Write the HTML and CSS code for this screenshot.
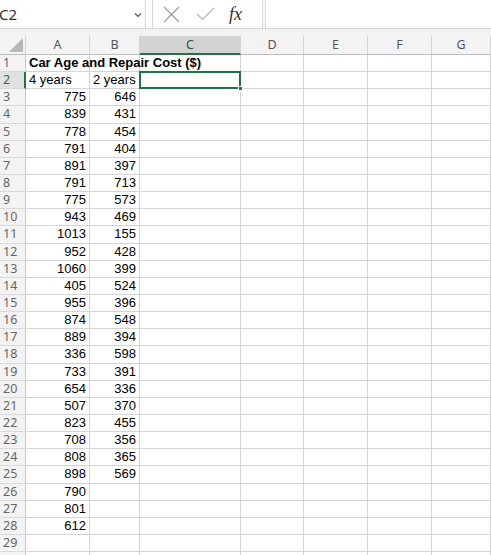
FILE: index.html
```html
<!DOCTYPE html>
<html lang="en">

<head>
    <meta charset="UTF-8">
    <meta name="viewport" content="width=device-width, initial-scale=1.0">
    <title>Car Age and Repair Cost</title>
    <link rel="stylesheet" href="styles.css">
</head>

<body>
    <div class="formula-bar">
        <div class="name-box">
            <span class="name">C2</span>
            <svg class="chevron" width="8" height="6" viewBox="0 0 8 6">
                <path d="M1 1.5 L4 4.5 L7 1.5" fill="none" stroke="#555" stroke-width="1.2" />
            </svg>
        </div>
        <div class="fx-box">
            <svg class="icon" width="17" height="17" viewBox="0 0 17 17">
                <path d="M1 1 L16 16 M16 1 L1 16" stroke="#9a9a9a" stroke-width="1.1" fill="none" />
            </svg>
            <svg class="icon" width="19" height="16" viewBox="0 0 19 16">
                <path d="M1 8 L6.5 13.5 L18 2" stroke="#b0b0b0" stroke-width="1.1" fill="none" />
            </svg>
            <span class="fx">fx</span>
        </div>
        <div class="formula-input"></div>
    </div>

    <div class="band"></div>

    <div class="sheet"></div>

    <script>
        let sheet = document.querySelector('.sheet');
        let cols = ['A', 'B', 'C', 'D', 'E', 'F', 'G'];
        let colA = [775, 839, 778, 791, 891, 791, 775, 943, 1013, 952, 1060, 405, 955, 874, 889, 336, 733, 654, 507, 823, 708, 808, 898, 790, 801, 612];
        let colB = [646, 431, 454, 404, 397, 713, 573, 469, 155, 428, 399, 524, 396, 548, 394, 598, 391, 336, 370, 455, 356, 365, 569];

        // 表頭
        let html = '<div class="corner"><span class="tri"></span></div>';
        cols.forEach(c => {
            html += `<div class="col-head${c == 'C' ? ' active' : ''}">${c}</div>`;
        });

        for (let r = 1; r <= 30; r++) {
            html += `<div class="row-head${r == 2 ? ' active' : ''}">${r}</div>`;
            cols.forEach((c, i) => {
                let text = '';
                let cls = 'cell';
                if (r == 1 && i == 0) {
                    text = 'Car Age and Repair Cost ($)';
                    cls += ' title';
                } else if (r == 2 && i == 0) {
                    text = '4 years';
                } else if (r == 2 && i == 1) {
                    text = '2 years';
                } else if (r >= 3 && i == 0 && colA[r - 3]) {
                    text = colA[r - 3];
                    cls += ' num';
                } else if (r >= 3 && i == 1 && colB[r - 3]) {
                    text = colB[r - 3];
                    cls += ' num';
                }
                if (r == 2 && i == 2) {
                    cls += ' selected';
                    text = '<span class="handle"></span>';
                }
                html += `<div class="${cls}">${text}</div>`;
            });
        }
        sheet.innerHTML = html;
    </script>
</body>

</html>
```

FILE: styles.css
```css
* {
    box-sizing: border-box;
    margin: 0;
}

body {
    width: 491px;
    height: 555px;
    overflow: hidden;
    background-color: #fff;
    font-family: 'Liberation Sans', Arial, sans-serif;
}

.formula-bar {
    display: flex;
    height: 29px;
    background-color: #fff;
    border-bottom: 1px solid #d5d5d5;
}

.name-box {
    width: 146px;
    display: flex;
    align-items: center;
    justify-content: space-between;
    padding-right: 3px;
    border-right: 1px solid #d5d5d5;
}

.name {
    margin-left: -1px;
    font-family: 'Noto Sans', sans-serif;
    font-size: 15px;
    color: #333;
}

.chevron {
    margin-top: 2px;
}

.fx-box {
    margin-left: 6px;
    width: 111px;
    display: flex;
    align-items: center;
    border-left: 1px solid #d5d5d5;
    border-right: 1px solid #d5d5d5;
    padding-left: 10px;
    gap: 16px;
}

.fx {
    font-family: 'Liberation Serif', serif;
    font-style: italic;
    font-size: 18px;
    color: #333;
    margin-left: -2px;
}

.formula-input {
    flex: 1;
    margin-left: 2px;
    border-left: 1px solid #d5d5d5;
}

.band {
    height: 7px;
    background-color: #f3f3f3;
}

.sheet {
    display: grid;
    grid-template-columns: 26px 64px 50px 101px 63px 64px 64px 1fr;
    grid-template-rows: 19px;
    grid-auto-rows: 17.15px;
}

.corner {
    position: relative;
    background-color: #f3f3f3;
    border-right: 1px solid #d4d4d4;
    border-bottom: 1px solid #bdbdbd;
}

.tri {
    position: absolute;
    right: 2px;
    bottom: 2px;
    width: 0;
    height: 0;
    border-left: 14px solid transparent;
    border-bottom: 14px solid #b7b7b7;
}

.col-head {
    background-color: #f3f3f3;
    border-right: 1px solid #d4d4d4;
    border-bottom: 1px solid #bdbdbd;
    text-align: center;
    font-family: 'Noto Sans', sans-serif;
    font-size: 12.5px;
    line-height: 18px;
    color: #555;
}

.col-head.active {
    background-color: #d3d3d3;
    border-bottom: 2px solid #217346;
    color: #1d5e3a;
}

.row-head {
    background-color: #f3f3f3;
    border-right: 1px solid #c6c6c6;
    border-bottom: 1px solid #dadada;
    padding-left: 3px;
    font-family: 'Noto Sans', sans-serif;
    font-size: 12.5px;
    line-height: 16px;
    color: #666;
}

.row-head.active {
    background-color: #e1e1e1;
    border-right: 2px solid #217346;
    color: #217346;
}

.cell {
    position: relative;
    border-right: 1px solid #d4d4d4;
    border-bottom: 1px solid #d4d4d4;
    padding: 0 3px;
    font-size: 13px;
    line-height: 16px;
    color: #000;
    white-space: nowrap;
}

.title {
    font-weight: bold;
    overflow: visible;
    z-index: 1;
}

.num {
    text-align: right;
}

.selected::after {
    content: '';
    position: absolute;
    left: -1px;
    top: -1px;
    right: -1px;
    bottom: -1px;
    border: 2px solid #217346;
}

.handle {
    position: absolute;
    right: -3px;
    bottom: -3px;
    width: 5px;
    height: 5px;
    background-color: #217346;
    border: 1px solid #fff;
    z-index: 2;
}
```
